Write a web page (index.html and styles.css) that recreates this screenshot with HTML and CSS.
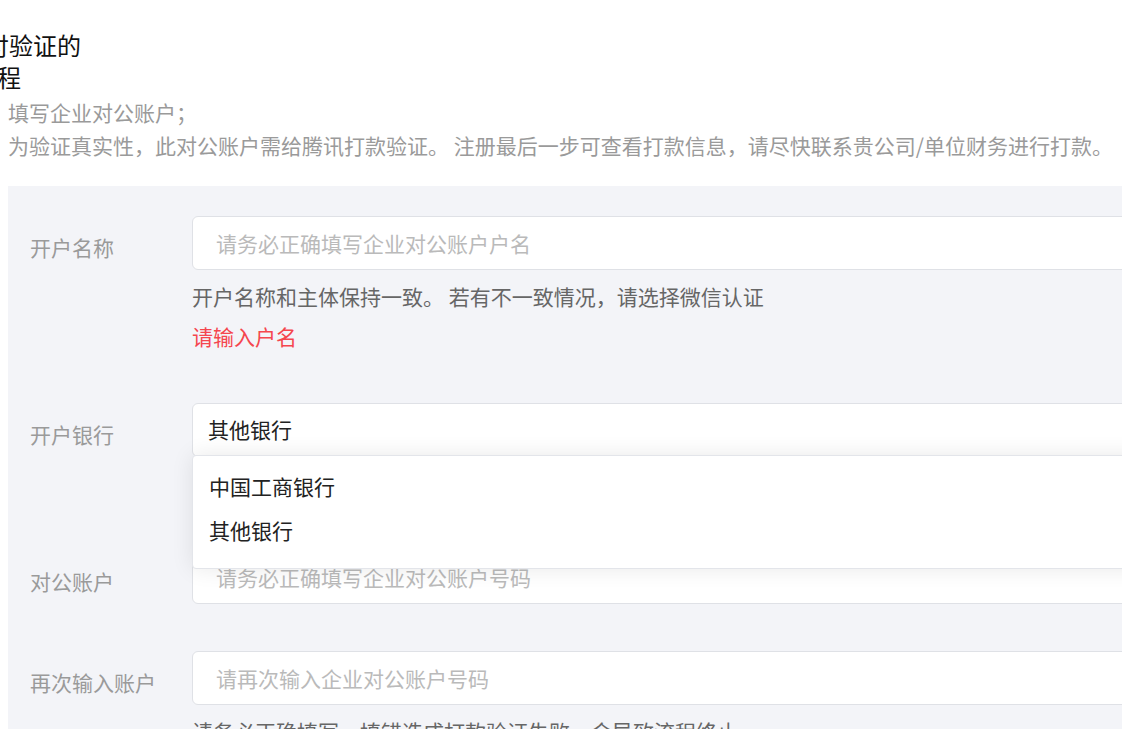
FILE: index.html
```html
<!DOCTYPE html>
<html lang="zh-CN">
<head>
<meta charset="utf-8">
<title>对公账户验证</title>
<link rel="stylesheet" href="styles.css">
</head>
<body>
<div class="page">
  <h2 class="title">打款支付验证的流程</h2>
  <ul class="steps">
    <li>填写企业对公账户；</li>
    <li>为验证真实性，此对公账户需给腾讯打款验证。 注册最后一步可查看打款信息，请尽快联系贵公司/单位财务进行打款。</li>
  </ul>
  <form class="panel">
    <div class="row">
      <label class="label">开户名称</label>
      <div class="field">
        <input class="input" type="text" placeholder="请务必正确填写企业对公账户户名">
        <p class="hint">开户名称和主体保持一致。 若有不一致情况，请选择微信认证</p>
        <p class="error">请输入户名</p>
      </div>
    </div>
    <div class="row">
      <label class="label">开户银行</label>
      <div class="field">
        <div class="select-wrap">
          <div class="select">其他银行</div>
          <ul class="dropdown">
            <li class="option">中国工商银行</li>
            <li class="option">其他银行</li>
          </ul>
        </div>
        <div class="hint-space"></div>
      </div>
    </div>
    <div class="row">
      <label class="label">对公账户</label>
      <div class="field">
        <input class="input" type="text" placeholder="请务必正确填写企业对公账户号码">
      </div>
    </div>
    <div class="row">
      <label class="label">再次输入账户</label>
      <div class="field">
        <input class="input" type="text" placeholder="请再次输入企业对公账户号码">
        <p class="hint">请务必正确填写，填错造成打款验证失败，会导致流程终止</p>
      </div>
    </div>
  </form>
</div>
</body>
</html>
```
FILE: styles.css
```css
html, body {
  margin: 0;
  padding: 0;
  overflow: hidden;
  background: #ffffff;
}

body {
  font-family: "Noto Sans CJK SC", "Noto Sans", sans-serif;
  color: #1a1a1a;
}

.page {
  padding-left: 8px;
  width: 1500px;
}

.title {
  margin: 29px 0 0 -101px;
  width: 180px;
  text-align: center;
  font-size: 24px;
  line-height: 32px;
  font-weight: normal;
  color: #111111;
}

.steps {
  margin: 3px 0 0;
  padding: 0;
  list-style: none;
  font-size: 21px;
  line-height: 33px;
  color: #9a9a9a;
  white-space: nowrap;
}

.panel {
  margin-top: 24px;
  background: #f3f4f8;
  padding: 30px 0 40px 22px;
  width: 1400px;
}

.row {
  display: grid;
  grid-template-columns: 162px 1fr;
  margin-bottom: 47px;
}

.label {
  font-size: 21px;
  line-height: 46px;
  padding-top: 8px;
  color: #9a9a9a;
  white-space: nowrap;
}

.field {
  display: flex;
  flex-direction: column;
}

.input {
  box-sizing: border-box;
  width: 100%;
  height: 54px;
  border: 1px solid #dfe1e6;
  border-radius: 6px;
  background: #ffffff;
  padding: 0 23px;
  font-family: inherit;
  font-size: 21px;
  color: #222222;
  outline: none;
  margin: 0;
}

.input::placeholder {
  color: #bababa;
}

.hint {
  margin: 6px 0 0;
  font-size: 21px;
  line-height: 40px;
  color: #666666;
}

.hint-space {
  margin-top: 6px;
  height: 40px;
}

.error {
  margin: 0;
  font-size: 21px;
  line-height: 40px;
  color: #f5464e;
}

.select-wrap {
  position: relative;
}

.select {
  box-sizing: border-box;
  height: 54px;
  border: 1px solid #dfe1e6;
  border-radius: 6px;
  background: #ffffff;
  padding: 0 15px;
  font-size: 21px;
  line-height: 50px;
  color: #222222;
}

.dropdown {
  position: absolute;
  top: 52px;
  left: 0;
  right: 0;
  z-index: 5;
  margin: 0;
  padding: 8px 0 16px;
  list-style: none;
  background: #ffffff;
  border: 1px solid #e3e5ea;
  border-radius: 4px;
  box-shadow: 0 0 22px rgba(0, 0, 0, 0.09);
}

.option {
  padding-left: 16px;
  font-size: 21px;
  line-height: 44px;
  color: #222222;
}
```
